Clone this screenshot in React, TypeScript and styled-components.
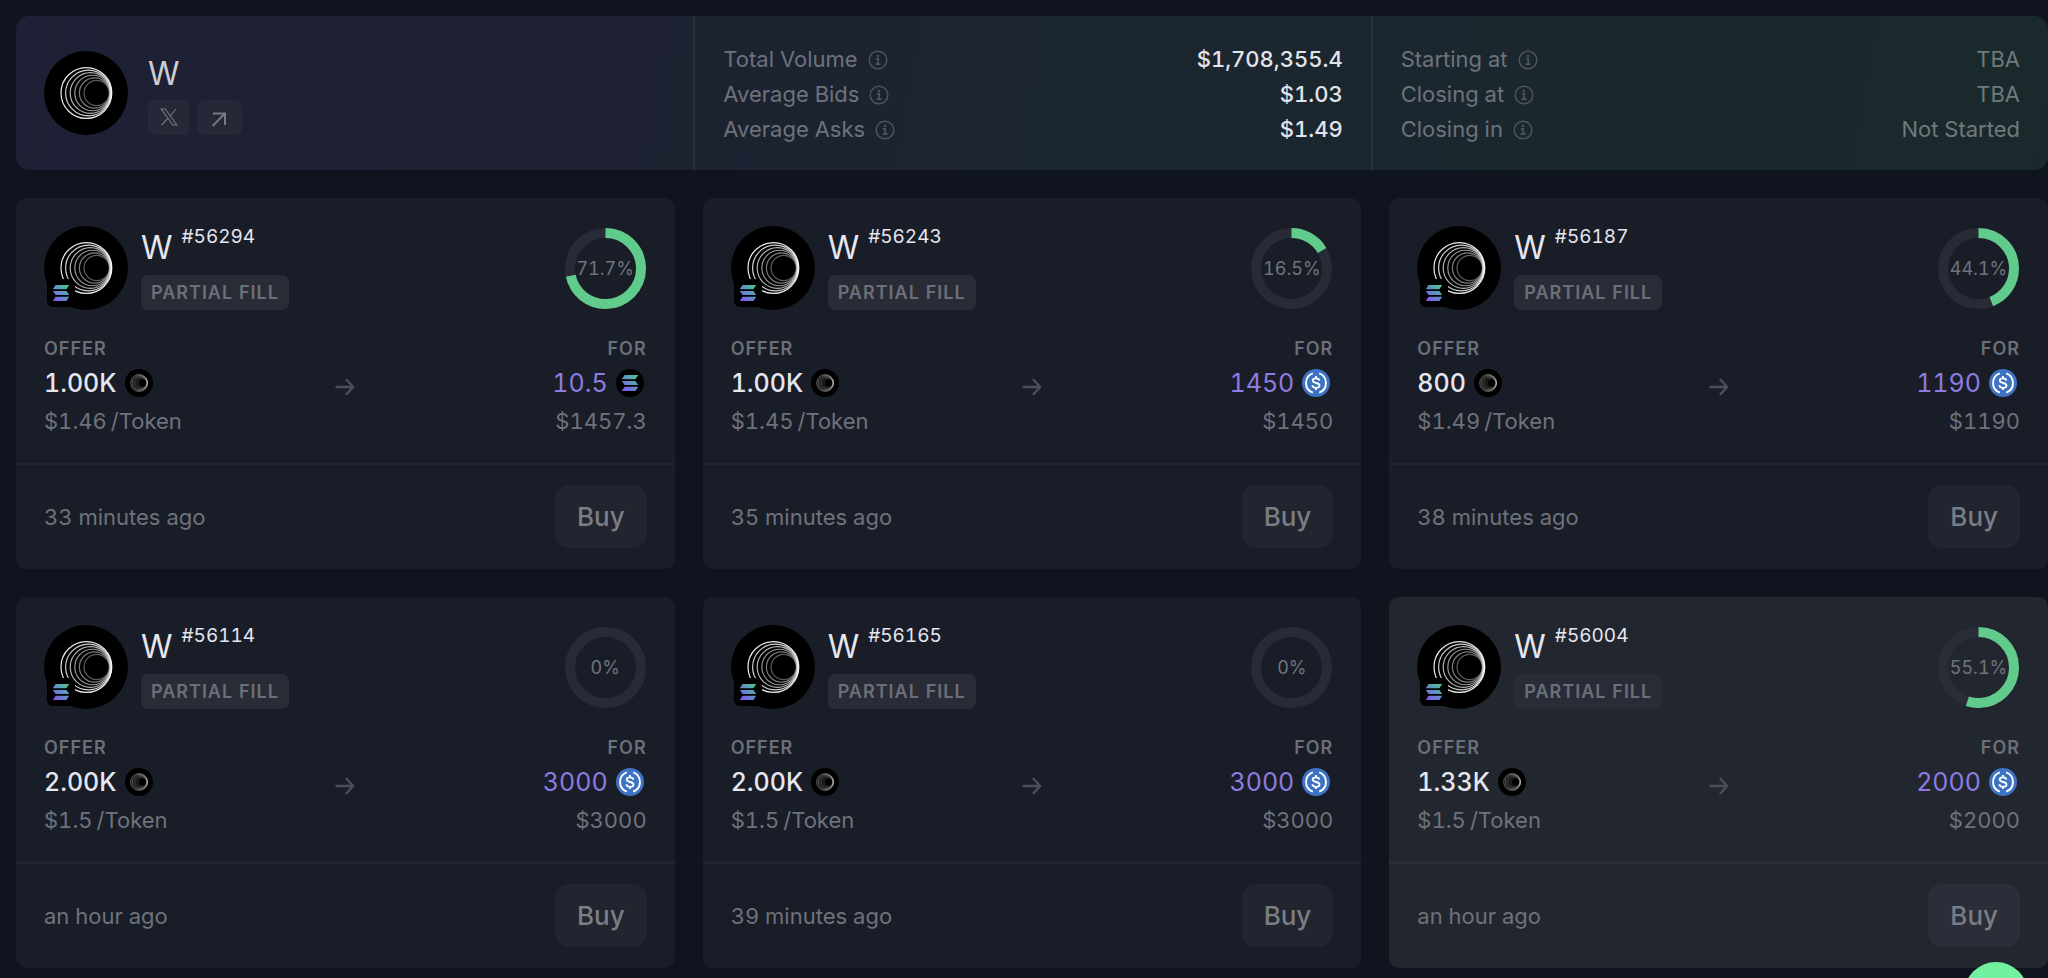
import React from "react";
import styled, { createGlobalStyle } from "styled-components";

const GlobalStyle = createGlobalStyle`
  *, *::before, *::after { box-sizing: border-box; }
  body {
    margin: 0;
    background: #10141e;
    color: #e4e6f0;
    font-family: Inter, "Liberation Sans", sans-serif;
    font-size: 22px;
    font-variant-numeric: tabular-nums;
    overflow-x: hidden;
  }
  h1, h2, p, dl, dt, dd { margin: 0; }
`;

const Page = styled.main`
  display: flex;
  flex-direction: column;
  gap: 28px;
  padding: 16px 0 10px 16px;
`;

const Summary = styled.header`
  display: grid;
  grid-template-columns: repeat(3, minmax(0, 1fr));
  border-radius: 14px;
  background: linear-gradient(100deg, #1e2035 0%, #1d2131 30%, #1b2530 50%, #1b272e 70%, #1a2a2c 100%);
`;

const SummaryColumn = styled.div`
  display: flex;
  flex-direction: column;
  justify-content: center;
  padding: 24px 28px 24px;

  & + & {
    padding: 26px 28px 23px;
    border-left: 2px solid #2a313c;
  }
`;

const Project = styled.div`
  display: flex;
  align-items: center;
  gap: 20px;
`;

const ProjectText = styled.div`
  display: flex;
  flex-direction: column;
  gap: 4px;
`;

const ProjectName = styled.h1`
  font-size: 32px;
  font-weight: 400;
  line-height: 44px;
  color: #cdcdd2;
`;

const Links = styled.nav`
  display: flex;
  gap: 7px;
`;

const IconLink = styled.a`
  display: flex;
  align-items: center;
  justify-content: center;
  height: 35px;
  padding: 0 12px;
  border-radius: 7px;
  background: #262837;
  color: #777985;
`;

const StatRow = styled.div`
  display: flex;
  align-items: center;
  justify-content: space-between;
  line-height: 35px;
`;

const StatLabel = styled.dt`
  display: flex;
  align-items: center;
  gap: 10px;
  color: #6e727c;

  svg { color: #4f535d; }
`;

const StatValue = styled.dd<{ $muted?: boolean }>`
  font-weight: ${(p) => (p.$muted ? 400 : 500)};
  color: ${(p) => (p.$muted ? "#6f7a7b" : "#e2e4ec")};
`;

const Grid = styled.section`
  display: grid;
  grid-template-columns: repeat(3, minmax(0, 1fr));
  gap: 28px;
`;

const Card = styled.article<{ $active?: boolean }>`
  --line: ${(p) => (p.$active ? "#2a2e38" : "#21252f")};
  border-radius: 10px;
  background: ${(p) => (p.$active ? "#22262f" : "#191d27")};
`;

const CardBody = styled.div`
  display: flex;
  flex-direction: column;
  gap: 22px;
  padding: 28px 28px 21px;
`;

const CardHead = styled.div`
  display: flex;
  align-items: center;
  gap: 13px;
`;

const LogoBox = styled.div`
  position: relative;
  display: flex;
`;

const ChainBadge = styled.span`
  position: absolute;
  left: 3px;
  bottom: 3px;
  display: flex;
  align-items: center;
  justify-content: center;
  width: 28px;
  height: 28px;
  border-radius: 6px;
  background: #000;
`;

const OfferTitle = styled.div`
  display: flex;
  flex: 1;
  flex-direction: column;
  align-items: flex-start;
  gap: 6px;
`;

const OfferName = styled.h2`
  display: flex;
  gap: 9px;
  font-size: 32px;
  font-weight: 400;
  line-height: 43px;
`;

const OfferId = styled.span`
  font-size: 19px;
  line-height: 22px;
`;

const Tag = styled.span`
  padding: 0 10px;
  border-radius: 7px;
  background: #292c36;
  color: #6b6f79;
  font-size: 18px;
  font-weight: 600;
  line-height: 35px;
  letter-spacing: 1px;
`;

const RingBox = styled.div`
  display: grid;
  place-items: center;
  margin-right: 1px;

  & > * { grid-area: 1 / 1; }
`;

const RingText = styled.span`
  color: #70747e;
  font-size: 18px;
`;

const Trade = styled.div`
  display: grid;
  grid-template-columns: 1fr auto 1fr;
  align-items: center;
`;

const Side = styled.div<{ $end?: boolean }>`
  display: flex;
  flex-direction: column;
  align-items: ${(p) => (p.$end ? "flex-end" : "flex-start")};
`;

const SideLabel = styled.span`
  color: #6b6f79;
  font-size: 18px;
  font-weight: 600;
  line-height: 34px;
  letter-spacing: 1px;
`;

const Amount = styled.span<{ $accent?: boolean }>`
  display: flex;
  align-items: center;
  gap: 8px;
  padding-right: ${(p) => (p.$accent ? "3px" : "0")};
  color: ${(p) => (p.$accent ? "#8e7be0" : "#e4e6f0")};
  font-size: 25px;
  font-weight: ${(p) => (p.$accent ? 400 : 500)};
  line-height: 34px;
`;

const Price = styled.span`
  display: flex;
  gap: 4px;
  color: #6e727c;
  line-height: 42px;
`;

const ArrowBox = styled.span`
  display: flex;
  color: #4c4f59;
`;

const CardFoot = styled.footer`
  display: flex;
  align-items: center;
  justify-content: space-between;
  padding: 20px 28px 21px;
  border-top: 2px solid var(--line);
  color: #6e727c;
`;

const BuyButton = styled.button`
  height: 63px;
  padding: 0 22px;
  border: 0;
  border-radius: 14px;
  background: var(--line);
  color: #7b7d84;
  font: 500 26px Inter, "Liberation Sans", sans-serif;
`;

const ChatButton = styled.button`
  position: fixed;
  right: 20px;
  bottom: -48px;
  width: 64px;
  height: 64px;
  border: 0;
  border-radius: 50%;
  background: #72f09f;
`;

const RINGS = [0, 1, 2, 3, 4, 5];

function TokenLogo({ size }: { size: number }) {
  return (
    <svg width={size} height={size} viewBox="0 0 84 84" fill="none" aria-hidden="true">
      <circle cx="42" cy="42" r="42" fill="#000" />
      {RINGS.map((i) => {
        const left = 17 + 4.6 * i;
        const right = 67.8 - 0.5 * i;
        return (
          <circle
            key={i}
            cx={(left + right) / 2}
            cy="42"
            r={(right - left) / 2}
            stroke="#fff"
            strokeWidth="1.2"
            opacity={0.92 - i * 0.11}
          />
        );
      })}
    </svg>
  );
}

function SolanaMark() {
  return (
    <svg width="18" height="16" viewBox="0 0 18 16" aria-hidden="true">
      <defs>
        <linearGradient id="sol" x1="2" y1="16" x2="16" y2="0" gradientUnits="userSpaceOnUse">
          <stop offset="0" stopColor="#8a50f0" />
          <stop offset="0.5" stopColor="#5f8fc8" />
          <stop offset="1" stopColor="#4cc794" />
        </linearGradient>
      </defs>
      <path
        fill="url(#sol)"
        d="M3.6 0H17.2L14.4 4.2H0.8ZM0.8 5.9H14.4L17.2 10.1H3.6ZM3.6 11.8H17.2L14.4 16H0.8Z"
      />
    </svg>
  );
}

function SolanaCoin() {
  return (
    <svg width="28" height="28" viewBox="0 0 28 28" aria-hidden="true">
      <circle cx="14" cy="14" r="14" fill="#000" />
      <g transform="translate(5 6)">
        <path
          fill="url(#sol)"
          d="M3.6 0H17.2L14.4 4.2H0.8ZM0.8 5.9H14.4L17.2 10.1H3.6ZM3.6 11.8H17.2L14.4 16H0.8Z"
        />
      </g>
    </svg>
  );
}

function UsdcCoin() {
  return (
    <svg width="28" height="28" viewBox="0 0 28 28" fill="none" stroke="#fff" aria-hidden="true">
      <circle cx="14" cy="14" r="14" fill="#3e73c4" stroke="none" />
      <path strokeWidth="1.9" d="M10.8 4.4a10.2 10.2 0 0 0 0 19.2M17.2 4.4a10.2 10.2 0 0 1 0 19.2" />
      <path
        strokeWidth="1.8"
        d="M17.4 11.6c-.2-1.5-1.5-2.3-3.4-2.3-2 0-3.3.9-3.3 2.3 0 3.4 6.8 1.4 6.8 4.8 0 1.5-1.4 2.4-3.5 2.4-2.1 0-3.5-.9-3.6-2.6M14 7v2.3M14 18.8V21"
      />
    </svg>
  );
}

function InfoIcon() {
  return (
    <svg width="20" height="20" viewBox="0 0 20 20" fill="none" stroke="currentColor" aria-hidden="true">
      <circle cx="10" cy="10" r="8.8" strokeWidth="1.5" />
      <path strokeWidth="1.6" d="M8 8.9h2.2v5M7.6 14.1h5" />
      <circle cx="10" cy="6" r="1.2" fill="currentColor" stroke="none" />
    </svg>
  );
}

function XIcon() {
  return (
    <svg width="18" height="18" viewBox="0 0 18 18" fill="none" stroke="currentColor" strokeWidth="1.1" aria-hidden="true">
      <path d="M1.2 1h4l11.6 16h-4ZM16 1 10 8M7.8 10.4 1.6 17" />
    </svg>
  );
}

function UpRightIcon() {
  return (
    <svg width="21" height="21" viewBox="0 0 21 21" fill="none" stroke="currentColor" strokeWidth="2" aria-hidden="true">
      <path d="M3.5 19 16 6.5M4 6.5h12V18" />
    </svg>
  );
}

function ArrowRight() {
  return (
    <svg width="20" height="18" viewBox="0 0 20 18" fill="none" stroke="currentColor" strokeWidth="2.4" strokeLinecap="round" strokeLinejoin="round" aria-hidden="true">
      <path d="M1.5 9H18M11.5 1.8 18.2 9l-6.7 7.2" />
    </svg>
  );
}

function ProgressRing({ value, active }: { value: number; active?: boolean }) {
  return (
    <RingBox>
      <svg width="81" height="81" viewBox="0 0 81 81" fill="none" strokeWidth="10" aria-hidden="true">
        <circle cx="40.5" cy="40.5" r="35.5" stroke={active ? "#2a2d37" : "#282b35"} />
        {value > 0 && (
          <circle
            cx="40.5"
            cy="40.5"
            r="35.5"
            stroke="#60cb8b"
            pathLength="100"
            strokeDasharray={`${value} 100`}
            transform="rotate(-90 40.5 40.5)"
          />
        )}
      </svg>
      <RingText>{value}%</RingText>
    </RingBox>
  );
}

type Offer = {
  id: string;
  fill: number;
  amount: string;
  price: string;
  cost: string;
  usd: string;
  coin: "sol" | "usdc";
  time: string;
  active?: boolean;
};

const OFFERS: Offer[] = [
  { id: "#56294", fill: 71.7, amount: "1.00K", price: "$1.46", cost: "10.5", usd: "$1457.3", coin: "sol", time: "33 minutes ago" },
  { id: "#56243", fill: 16.5, amount: "1.00K", price: "$1.45", cost: "1450", usd: "$1450", coin: "usdc", time: "35 minutes ago" },
  { id: "#56187", fill: 44.1, amount: "800", price: "$1.49", cost: "1190", usd: "$1190", coin: "usdc", time: "38 minutes ago" },
  { id: "#56114", fill: 0, amount: "2.00K", price: "$1.5", cost: "3000", usd: "$3000", coin: "usdc", time: "an hour ago" },
  { id: "#56165", fill: 0, amount: "2.00K", price: "$1.5", cost: "3000", usd: "$3000", coin: "usdc", time: "39 minutes ago" },
  { id: "#56004", fill: 55.1, amount: "1.33K", price: "$1.5", cost: "2000", usd: "$2000", coin: "usdc", time: "an hour ago", active: true },
];

const VOLUME_STATS = [
  ["Total Volume", "$1,708,355.4"],
  ["Average Bids", "$1.03"],
  ["Average Asks", "$1.49"],
];

const TIME_STATS = [
  ["Starting at", "TBA"],
  ["Closing at", "TBA"],
  ["Closing in", "Not Started"],
];

function Stats({ rows, muted }: { rows: string[][]; muted?: boolean }) {
  return (
    <SummaryColumn as="dl">
      {rows.map(([label, value]) => (
        <StatRow key={label}>
          <StatLabel>
            {label}
            <InfoIcon />
          </StatLabel>
          <StatValue $muted={muted}>{value}</StatValue>
        </StatRow>
      ))}
    </SummaryColumn>
  );
}

function OfferCard({ offer }: { offer: Offer }) {
  return (
    <Card $active={offer.active}>
      <CardBody>
        <CardHead>
          <LogoBox>
            <TokenLogo size={84} />
            <ChainBadge>
              <SolanaMark />
            </ChainBadge>
          </LogoBox>
          <OfferTitle>
            <OfferName>
              W <OfferId>{offer.id}</OfferId>
            </OfferName>
            <Tag>PARTIAL FILL</Tag>
          </OfferTitle>
          <ProgressRing value={offer.fill} active={offer.active} />
        </CardHead>
        <Trade>
          <Side>
            <SideLabel>OFFER</SideLabel>
            <Amount>
              {offer.amount}
              <TokenLogo size={28} />
            </Amount>
            <Price>
              <span>{offer.price}</span>
              <span>/Token</span>
            </Price>
          </Side>
          <ArrowBox>
            <ArrowRight />
          </ArrowBox>
          <Side $end>
            <SideLabel>FOR</SideLabel>
            <Amount $accent>
              {offer.cost}
              {offer.coin === "sol" ? <SolanaCoin /> : <UsdcCoin />}
            </Amount>
            <Price>{offer.usd}</Price>
          </Side>
        </Trade>
      </CardBody>
      <CardFoot>
        <time>{offer.time}</time>
        <BuyButton type="button">Buy</BuyButton>
      </CardFoot>
    </Card>
  );
}

export default function App() {
  return (
    <>
      <GlobalStyle />
      <Page>
        <Summary>
          <SummaryColumn>
            <Project>
              <TokenLogo size={84} />
              <ProjectText>
                <ProjectName>W</ProjectName>
                <Links>
                  <IconLink href="#x" aria-label="X profile">
                    <XIcon />
                  </IconLink>
                  <IconLink href="#site" aria-label="Website">
                    <UpRightIcon />
                  </IconLink>
                </Links>
              </ProjectText>
            </Project>
          </SummaryColumn>
          <Stats rows={VOLUME_STATS} />
          <Stats rows={TIME_STATS} muted />
        </Summary>
        <Grid>
          {OFFERS.map((offer) => (
            <OfferCard key={offer.id} offer={offer} />
          ))}
        </Grid>
      </Page>
      <ChatButton type="button" aria-label="Open chat" />
    </>
  );
}
